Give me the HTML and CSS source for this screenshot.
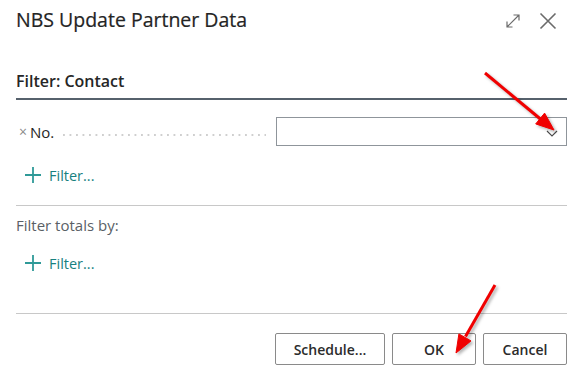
FILE: index.html
```html
<!DOCTYPE html>
<html lang="en">
<head>
    <meta charset="UTF-8">
    <title>NBS Update Partner Data</title>
    <link rel="stylesheet" href="styles.css">
</head>
<body>
<div class="dialog">
    <div class="header">
        <h1 class="title">NBS Update Partner Data</h1>
        <div class="header-icons">
            <svg class="icon-expand" width="16" height="16" viewBox="0 0 16 16">
                <path d="M2 14 L14 2 M8.5 2 H14 V7.5 M2 8.5 V14 H7.5" fill="none" stroke="#6b6b6b" stroke-width="1.2"/>
            </svg>
            <svg class="icon-close" width="18" height="18" viewBox="0 0 18 18">
                <path d="M1.5 1.5 L16.5 16.5 M16.5 1.5 L1.5 16.5" fill="none" stroke="#6b6b6b" stroke-width="1.6"/>
            </svg>
        </div>
    </div>

    <div class="section-head">Filter: Contact</div>

    <div class="filter-row">
        <div class="filter-label">
            <span class="remove">&times;</span>
            <span class="name">No.</span>
            <span class="leader"></span>
        </div>
        <div class="input">
            <svg class="chevron" width="12" height="7" viewBox="0 0 12 7">
                <path d="M1 1 L6 6 L11 1" fill="none" stroke="#4a4a4a" stroke-width="1.1"/>
            </svg>
        </div>
    </div>

    <div class="add-filter first">
        <svg width="16" height="16" viewBox="0 0 16 16">
            <path d="M8 0 V16 M0 8 H16" stroke="#2f9a98" stroke-width="1.8"/>
        </svg>
        <span>Filter...</span>
    </div>

    <div class="separator sep-1"></div>

    <div class="totals-label">Filter totals by:</div>

    <div class="add-filter second">
        <svg width="16" height="16" viewBox="0 0 16 16">
            <path d="M8 0 V16 M0 8 H16" stroke="#2f9a98" stroke-width="1.8"/>
        </svg>
        <span>Filter...</span>
    </div>

    <div class="separator sep-2"></div>

    <div class="footer">
        <button class="btn btn-schedule">Schedule...</button>
        <button class="btn btn-ok">OK</button>
        <button class="btn btn-cancel">Cancel</button>
    </div>
</div>

<svg class="arrows" width="587" height="383" viewBox="0 0 587 383">
    <g fill="#f00000" stroke="#f00000">
        <line x1="485" y1="73" x2="541" y2="119.5" stroke-width="3"/>
        <polygon points="554,130 544.6,113.1 535.7,123.9" stroke-width="1"/>
        <line x1="495" y1="285" x2="465.5" y2="336.5" stroke-width="3"/>
        <polygon points="456,353 458.9,333.9 471,340.9" stroke-width="1"/>
    </g>
</svg>
</body>
</html>
```

FILE: styles.css
```css
body {
    margin: 0;
    background: #ffffff;
    font-family: "Open Sans", "Noto Sans", sans-serif;
    color: #212121;
}

.dialog {
    width: 551px;
    padding: 0 20px 0 16px;
}

.header {
    display: flex;
    justify-content: space-between;
    align-items: center;
    height: 40px;
}

.title {
    margin: 0;
    font-size: 19.5px;
    font-weight: 500;
    line-height: 28px;
    color: #242424;
    -webkit-text-stroke: 0.2px #242424;
}

.header-icons {
    display: flex;
    align-items: center;
    gap: 18px;
    padding-right: 10px;
    padding-top: 2px;
}

.section-head {
    margin-top: 29px;
    padding-bottom: 5px;
    border-bottom: 2px solid #56616c;
    font-size: 16px;
    font-weight: 600;
    line-height: 24px;
    color: #262626;
}

.filter-row {
    display: grid;
    grid-template-columns: 260px 1fr;
    margin-top: 17px;
}

.filter-label {
    display: flex;
    align-items: center;
    padding-left: 3px;
    font-size: 15px;
    color: #262626;
}

.remove {
    font-size: 14px;
    color: #8a8a8a;
    margin-right: 3px;
}

.leader {
    flex: 1;
    height: 2px;
    margin: 6px 10px 0 9px;
    background-image: linear-gradient(to right, #cfcfcf 2px, transparent 2px);
    background-size: 6.5px 2px;
    background-repeat: repeat-x;
}

.input {
    height: 27px;
    border: 1px solid #8f959b;
    display: flex;
    justify-content: flex-end;
    align-items: center;
    padding-right: 8px;
}

.chevron {
    margin-top: 4px;
}

.add-filter {
    display: flex;
    align-items: center;
    gap: 8px;
    height: 28px;
    padding-left: 9px;
    font-size: 14.5px;
    color: #17817f;
}

.add-filter.first {
    margin-top: 15px;
}

.add-filter.second {
    margin-top: 14px;
}

.separator {
    height: 1px;
    background: #c8c8c8;
}

.sep-1 {
    margin-top: 16px;
}

.sep-2 {
    margin-top: 36px;
}

.totals-label {
    margin-top: 9px;
    font-size: 15px;
    line-height: 20px;
    color: #5a5f66;
}

.footer {
    display: flex;
    justify-content: flex-end;
    gap: 7px;
    margin-top: 19px;
}

.btn {
    height: 32px;
    border: 1px solid #8a8a8a;
    border-radius: 2px;
    background: #ffffff;
    font-family: "Open Sans", "Noto Sans", sans-serif;
    font-size: 14px;
    font-weight: 600;
    color: #2b2b2b;
    padding: 0;
}

.btn-schedule {
    width: 110px;
}

.btn-ok,
.btn-cancel {
    width: 84px;
}

.arrows {
    position: absolute;
    top: 0;
    left: 0;
    pointer-events: none;
    filter: drop-shadow(2px 2px 1.5px rgba(0, 0, 0, 0.3));
}
```
